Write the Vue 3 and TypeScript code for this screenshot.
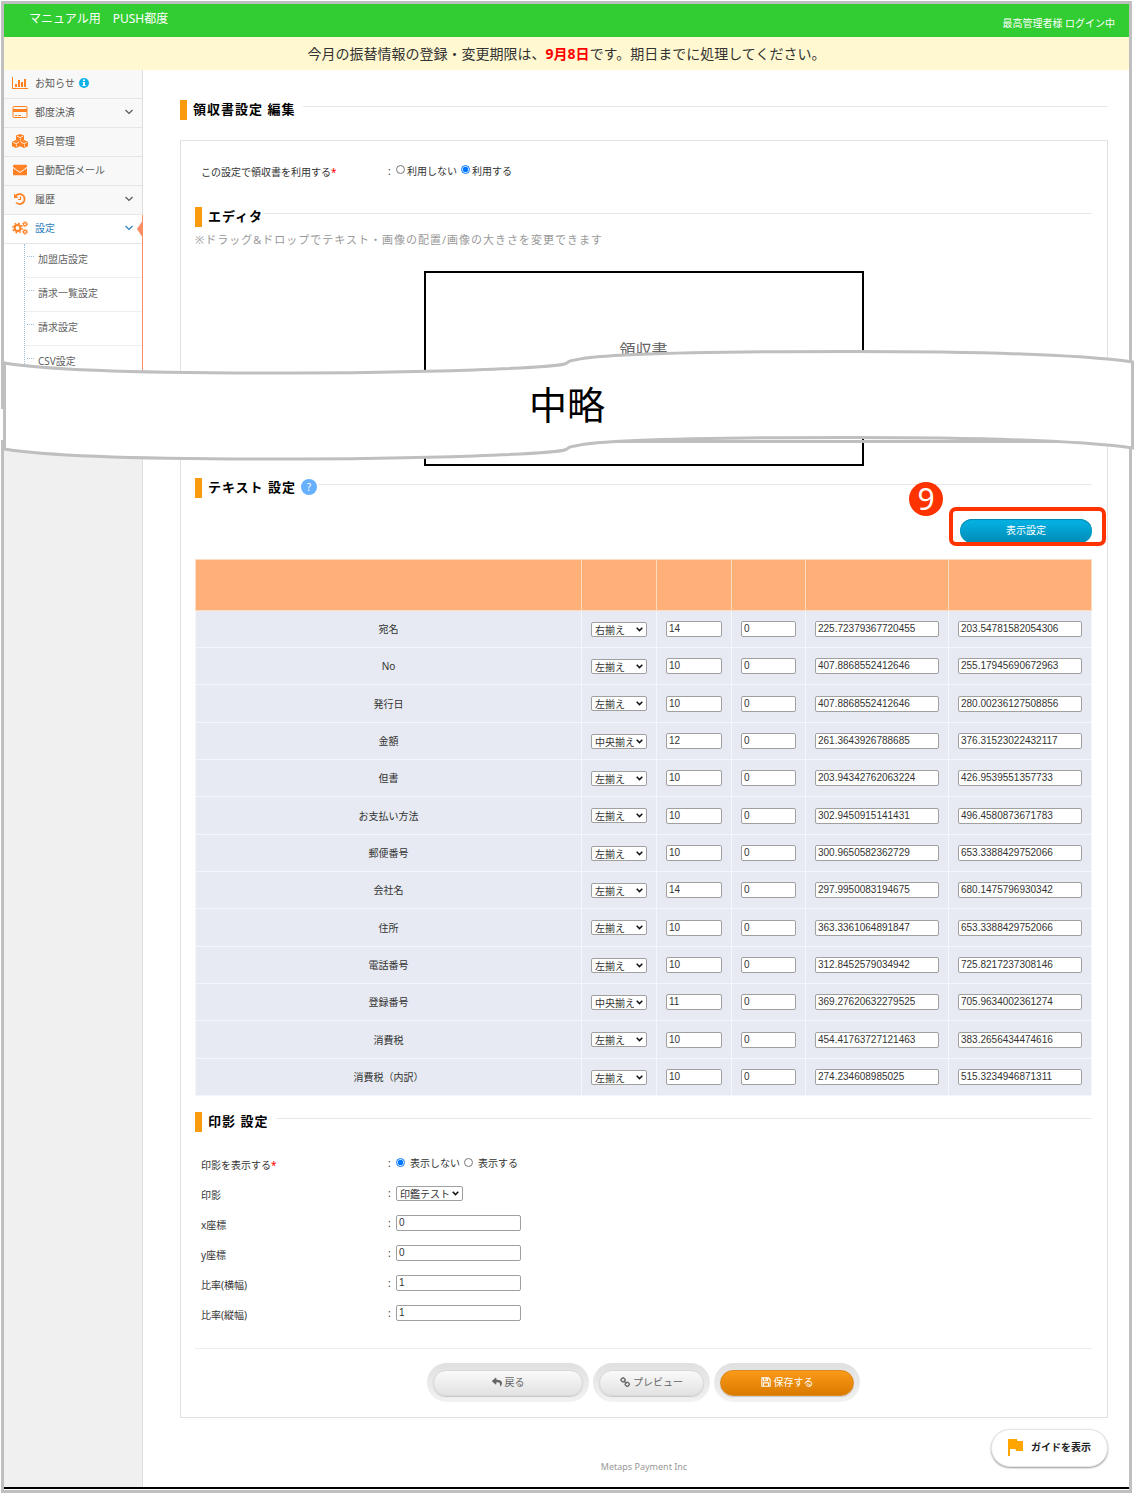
<script setup lang="ts">
import { ref } from 'vue'

type IconName = 'chart' | 'card' | 'cubes' | 'mail' | 'history' | 'cogs'

interface MenuItem {
  label: string
  icon: IconName
  info?: boolean
  expandable?: boolean
  children?: string[]
}

interface TextRow {
  name: string
  align: string
  size: string
  spacing: string
  x: string
  y: string
}

const menu: MenuItem[] = [
  { label: 'お知らせ', icon: 'chart', info: true },
  { label: '都度決済', icon: 'card', expandable: true },
  { label: '項目管理', icon: 'cubes' },
  { label: '自動配信メール', icon: 'mail' },
  { label: '履歴', icon: 'history', expandable: true },
  {
    label: '設定',
    icon: 'cogs',
    expandable: true,
    children: ['加盟店設定', '請求一覧設定', '請求設定', 'CSV設定'],
  },
]

const alignments = ['左揃え', '中央揃え', '右揃え']

const row = (name: string, align: string, size: string, x: string, y: string): TextRow => ({
  name,
  align,
  size,
  spacing: '0',
  x,
  y,
})

const rows = ref<TextRow[]>([
  row('宛名', '右揃え', '14', '225.72379367720455', '203.54781582054306'),
  row('No', '左揃え', '10', '407.8868552412646', '255.17945690672963'),
  row('発行日', '左揃え', '10', '407.8868552412646', '280.00236127508856'),
  row('金額', '中央揃え', '12', '261.3643926788685', '376.31523022432117'),
  row('但書', '左揃え', '10', '203.94342762063224', '426.9539551357733'),
  row('お支払い方法', '左揃え', '10', '302.9450915141431', '496.4580873671783'),
  row('郵便番号', '左揃え', '10', '300.9650582362729', '653.3388429752066'),
  row('会社名', '左揃え', '14', '297.9950083194675', '680.1475796930342'),
  row('住所', '左揃え', '10', '363.3361064891847', '653.3388429752066'),
  row('電話番号', '左揃え', '10', '312.8452579034942', '725.8217237308146'),
  row('登録番号', '中央揃え', '11', '369.27620632279525', '705.9634002361274'),
  row('消費税', '左揃え', '10', '454.41763727121463', '383.2656434474616'),
  row('消費税（内訳）', '左揃え', '10', '274.234608985025', '515.3234946871311'),
])

const useReceipt = ref('on')
const showSeal = ref('off')
const seal = ref('印鑑テスト')
const sealFields = ref([
  { id: 'seal-x', label: 'x座標', value: '0' },
  { id: 'seal-y', label: 'y座標', value: '0' },
  { id: 'seal-w', label: '比率(横幅)', value: '1' },
  { id: 'seal-h', label: '比率(縦幅)', value: '1' },
])
</script>

<template>
  <div class="page">
    <div class="frame">
      <header class="topbar">
        <div class="service">マニュアル用　PUSH都度</div>
        <div class="login">最高管理者様 ログイン中</div>
      </header>
      <div class="notice">
        今月の振替情報の登録・変更期限は、<strong>9月8日</strong>です。期日までに処理してください。
      </div>

      <div class="body">
        <nav class="sidebar">
          <ul class="menu">
            <li v-for="item in menu" :key="item.label" :class="{ active: item.children }">
              <a href="#" class="menu-link">
                <svg class="menu-icon" viewBox="0 0 16 14" aria-hidden="true">
                  <g v-if="item.icon === 'chart'" fill="currentColor">
                    <path d="M0 1h1v11h15v1H0z" />
                    <path d="M3 8h2v3H3zM6 4h2v7H6zM9 6h2v5H9zM12 3h2v8h-2z" />
                  </g>
                  <g v-else-if="item.icon === 'card'">
                    <rect x="1" y="1.5" width="14" height="11" rx="1" fill="none" stroke="currentColor" />
                    <path d="M1 4h14v3H1z" fill="currentColor" />
                    <path d="M3 10.5h2M6 10.5h3" stroke="currentColor" />
                  </g>
                  <g v-else-if="item.icon === 'cubes'">
                    <g fill="currentColor">
                      <path d="M8 0l4 1.600v4.400L8 7.800 4 6V1.600z" />
                      <path d="M4 6l4 1.700v4.500L4 14 0 12.200V7.700z" />
                      <path d="M12 6l4 1.700v4.500L12 14 8 12.200V7.700z" />
                    </g>
                    <path
                      d="M5 2.200l3 1.300 3-1.300M8.500 4.500v2M1 8.300l3 1.300 3-1.300M4.500 10.600v2M9 8.300l3 1.300 3-1.300M12.500 10.600v2"
                      fill="none"
                      stroke="#fff"
                      stroke-width=".8"
                    />
                  </g>
                  <svg v-else-if="item.icon === 'mail'" x="1" width="14" height="14" viewBox="0 0 512 512">
                    <path
                      fill="currentColor"
                      d="M502.3 190.8c3.900-3.100 9.700-.2 9.700 4.700V400c0 26.500-21.500 48-48 48H48c-26.500 0-48-21.500-48-48V195.600c0-5 5.700-7.800 9.700-4.700 22.400 17.400 52.100 39.500 154.100 113.600 21.100 15.400 56.700 47.800 92.200 47.600 35.700.3 72-32.800 92.300-47.600 102-74.100 131.600-96.300 154-113.700zM256 320c23.200.4 56.600-29.200 73.400-41.400 132.700-96.300 142.800-104.700 173.400-128.700 5.800-4.500 9.200-11.500 9.200-18.900v-19c0-26.500-21.500-48-48-48H48c-26.500 0-48 21.500-48 48v19c0 7.400 3.400 14.300 9.200 18.900 30.600 23.900 40.700 32.400 173.400 128.700 16.800 12.200 50.200 41.800 73.400 41.400z"
                    />
                  </svg>
                  <g v-else-if="item.icon === 'history'" fill="none" stroke="currentColor">
                    <path d="M3.500 4.200A5 5 0 1 1 4 10.500" stroke-width="1.800" />
                    <path d="M2 1.500v4.500h4.500z" fill="currentColor" stroke="none" />
                    <path d="M8.500 4.500v3H6" stroke-width="1.200" />
                  </g>
                  <g v-else fill="none" stroke="currentColor">
                    <circle cx="5.500" cy="7" r="2.900" stroke-width="2" />
                    <circle cx="5.500" cy="7" r="4.700" stroke-width="1.400" stroke-dasharray="1.850 1.840" />
                    <circle cx="13" cy="3.200" r="1.500" stroke-width="1.200" />
                    <circle cx="13" cy="3.200" r="2.500" stroke-dasharray="1 .96" />
                    <circle cx="13" cy="10.800" r="1.500" stroke-width="1.200" />
                    <circle cx="13" cy="10.800" r="2.500" stroke-dasharray="1 .96" />
                  </g>
                </svg>
                <span>{{ item.label }}</span>
                <svg v-if="item.info" class="info" viewBox="0 0 10 10" aria-hidden="true">
                  <circle cx="5" cy="5" r="5" fill="#0fb1e6" />
                  <path d="M4 1.500h2V3H4zM3.500 4H6v3h.7v1H3.400V7H4V5h-.5z" fill="#fff" />
                </svg>
                <svg v-if="item.expandable" class="chevron" viewBox="0 0 8 6" aria-hidden="true">
                  <path d="M.5 1L4 4.500 7.500 1" fill="none" stroke="currentColor" stroke-width="1.200" />
                </svg>
              </a>
              <ul v-if="item.children" class="submenu">
                <li v-for="child in item.children" :key="child">
                  <a href="#">{{ child }}</a>
                </li>
              </ul>
            </li>
          </ul>
        </nav>

        <main class="main">
          <h1 class="heading">領収書設定 編集</h1>

          <form class="panel" @submit.prevent>
            <div class="field first">
              <span class="field-label">この設定で領収書を利用する<em>*</em></span>
              <span class="field-body">
                <span class="colon">:</span>
                <label><input v-model="useReceipt" type="radio" name="use" value="off" />利用しない</label>
                <label><input v-model="useReceipt" type="radio" name="use" value="on" />利用する</label>
              </span>
            </div>

            <h2 class="heading tight">エディタ</h2>
            <p class="hint">※ドラッグ&amp;ドロップでテキスト・画像の配置/画像の大きさを変更できます</p>
            <div class="canvas">領収書</div>

            <h2 class="heading tight">テキスト 設定<button type="button" class="help">?</button></h2>

            <div class="toolbar">
              <div class="callout">
                <button type="button" class="display-button">表示設定</button>
                <span class="callout-box"></span>
                <span class="callout-number">9</span>
              </div>
            </div>

            <table class="settings">
              <colgroup>
                <col />
                <col class="c-align" />
                <col class="c-size" />
                <col class="c-space" />
                <col class="c-pos" />
                <col class="c-pos" />
              </colgroup>
              <thead>
                <tr>
                  <td v-for="n in 6" :key="n"></td>
                </tr>
              </thead>
              <tbody>
                <tr v-for="(r, i) in rows" :key="r.name">
                  <th :id="`row-${i}`" scope="row">{{ r.name }}</th>
                  <td>
                    <select v-model="r.align" :aria-labelledby="`row-${i}`">
                      <option v-for="a in alignments" :key="a">{{ a }}</option>
                    </select>
                  </td>
                  <td><input v-model="r.size" type="text" :aria-labelledby="`row-${i}`" /></td>
                  <td><input v-model="r.spacing" type="text" :aria-labelledby="`row-${i}`" /></td>
                  <td><input v-model="r.x" type="text" :aria-labelledby="`row-${i}`" /></td>
                  <td><input v-model="r.y" type="text" :aria-labelledby="`row-${i}`" /></td>
                </tr>
              </tbody>
            </table>

            <h2 class="heading">印影 設定</h2>
            <div class="fields">
              <div class="field spaced">
                <span class="field-label">印影を表示する<em>*</em></span>
                <span class="field-body">
                  <span class="colon">:</span>
                  <label><input v-model="showSeal" type="radio" name="seal" value="off" />表示しない</label>
                  <label><input v-model="showSeal" type="radio" name="seal" value="on" />表示する</label>
                </span>
              </div>
              <div class="field">
                <label class="field-label" for="seal-image">印影</label>
                <span class="field-body">
                  <span class="colon">:</span>
                  <select id="seal-image" v-model="seal">
                    <option>印鑑テスト</option>
                  </select>
                </span>
              </div>
              <div v-for="f in sealFields" :key="f.id" class="field">
                <label class="field-label" :for="f.id">{{ f.label }}</label>
                <span class="field-body">
                  <span class="colon">:</span>
                  <input :id="f.id" v-model="f.value" type="text" />
                </span>
              </div>
            </div>

            <div class="actions">
              <span class="pill">
                <button type="button" class="back">
                  <svg viewBox="0 0 512 512" aria-hidden="true">
                    <path
                      fill="currentColor"
                      d="M8.309 189.836L184.313 37.851C199.719 24.546 224 35.347 224 56.015v80.053c160.629 1.839 288 34.032 288 186.258 0 61.441-39.581 122.309-83.333 154.132-13.653 9.931-33.111-2.533-28.077-18.631 45.344-145.012-21.507-183.510-176.590-185.742V360c0 20.700-24.300 31.453-39.687 18.164l-176.004-152c-11.071-9.562-11.086-26.753 0-36.328z"
                    />
                  </svg>
                  戻る
                </button>
              </span>
              <span class="pill">
                <button type="button" class="preview">
                  <svg viewBox="0 0 12 12" aria-hidden="true">
                    <g fill="none" stroke="currentColor" stroke-width="1.600">
                      <rect x="1.500" y="1.300" width="4.400" height="4.400" rx="1.500" transform="rotate(45 3.700 3.500)" />
                      <rect x="6.500" y="6.500" width="4.400" height="4.400" rx="1.500" transform="rotate(45 8.700 8.700)" />
                      <path d="M4.500 4.500l3.200 3.200" />
                    </g>
                  </svg>
                  プレビュー
                </button>
              </span>
              <span class="pill">
                <button type="submit" class="save">
                  <svg viewBox="0 0 12 12" aria-hidden="true">
                    <path
                      d="M1 1h8l2 2v8H1zM3 1v3.500h5V1M3 11V7h6v4"
                      fill="none"
                      stroke="currentColor"
                      stroke-width="1.300"
                    />
                    <path d="M5.500 1.500h1.500v2H5.500z" fill="currentColor" />
                  </svg>
                  保存する
                </button>
              </span>
            </div>
          </form>

          <footer class="footer">
            <span class="company">Metaps Payment Inc</span>
            <button type="button" class="guide">
              <svg viewBox="5 4 15 17" aria-hidden="true">
                <path d="M14.400 6L14 4H5v17h2v-7h5.600l.4 2h7V6z" fill="#ffa500" />
              </svg>
              ガイドを表示
            </button>
          </footer>
        </main>
      </div>
    </div>

    <!-- Torn strip standing in for the omitted middle of the page -->
    <div class="omitted">
      <svg viewBox="0 0 1134 112" preserveAspectRatio="none" aria-hidden="true">
        <path d="M0 59h4v31H0z" fill="#fff" />
        <path d="M2 91.500H1130" stroke="#bfbfbf" stroke-width="3" />
        <path
          d="M4.500 13C40 19 120 23 270 23C430 23 555 18 566 13.500C570 11.500 567 11 575 10C600 4 720 1.500 850 1.500C1000 1.500 1090 6 1132.500 12V98C1090 92 1000 87.500 850 87.500C720 87.500 600 90 575 96C567 97 570 97.500 566 99.500C555 104 430 109 270 109C120 109 40 105 4.500 99Z"
          fill="#fff"
          stroke="#bfbfbf"
          stroke-width="3"
        />
      </svg>
      <span>中略</span>
    </div>
  </div>
</template>

<style>
body {
  margin: 0;
  background: #fff;
}
</style>

<style scoped>
* {
  box-sizing: border-box;
}

.page {
  position: relative;
  padding: 1px 2px 1px 1px;
  color: #333;
  font-family: 'Noto Sans', 'Noto Sans CJK JP', sans-serif;
  font-size: 10px;
  line-height: 16px;
}

.frame {
  border: 3px solid #bfbfbf;
}

a {
  color: inherit;
  text-decoration: none;
}

ul {
  margin: 0;
  padding: 0;
  list-style: none;
}

button,
select,
input {
  margin: 0;
  font: inherit;
  color: inherit;
}

.topbar {
  display: flex;
  justify-content: space-between;
  height: 33px;
  padding: 0 14px 0 25px;
  background: #32cd32;
  color: #fff;
}

.service {
  font-size: 12px;
  line-height: 30px;
}

.login {
  line-height: 38px;
}

.notice {
  background: #fff8d0;
  font-size: 14px;
  line-height: 33px;
  text-align: center;
}

.notice strong {
  color: #f00;
}

.body {
  display: grid;
  grid-template-columns: 139px 1fr;
  margin-bottom: 1px;
  border-bottom: 2px solid #000;
}

/* Sidebar */
.sidebar {
  background: #f0f0f0;
  border-right: 1px solid #ddd;
}

.menu-link {
  display: flex;
  align-items: center;
  height: 29px;
  padding: 0 9px 2px 8px;
  background: #f8f8f8;
  border-bottom: 1px solid #e6e6e6;
  color: #585858;
}

.menu-icon {
  width: 16px;
  height: 14px;
  margin-right: 7px;
  color: #ff8122;
}

.info {
  width: 10px;
  height: 10px;
  margin-left: 4px;
}

.chevron {
  width: 8px;
  height: 6px;
  margin-left: auto;
}

.active {
  position: relative;
  background: #fff;
  box-shadow: 1px 0 0 #fa8d63;
}

.active .menu-link {
  background: #fff;
  color: #2b7dbc;
}

.active::after {
  content: '';
  position: absolute;
  top: 5px;
  right: -1px;
  border: solid transparent;
  border-width: 9px 6px 9px 0;
  border-right-color: #fa8d63;
}

.submenu {
  margin-left: 20px;
  border-left: 1px dotted #9dbdd6;
}

.submenu li {
  position: relative;
  height: 34px;
  padding: 7px 0 0 13px;
  border-bottom: 1px solid #eee;
  color: #616161;
}

.submenu li::before {
  content: '';
  position: absolute;
  top: 12px;
  left: 2px;
  width: 7px;
  border-top: 1px dotted #9dbdd6;
}

/* Main column */
.main {
  min-width: 0;
  padding: 30px 21px 12px 37px;
}

.heading {
  display: flex;
  align-items: flex-start;
  height: 20px;
  margin: 0;
  color: #000;
  font-size: 13px;
  line-height: 18px;
  letter-spacing: 1px;
}

.heading::before {
  content: '';
  width: 7px;
  height: 20px;
  margin-right: 6px;
  background: #f99b0c;
}

.heading::after {
  content: '';
  flex: 1;
  margin: 6px 0 0 8px;
  border-top: 1px solid #e8e8e8;
}

.heading.tight::after {
  margin-left: 1px;
}

.help {
  width: 16px;
  height: 16px;
  margin: 1px 0 0 5px;
  padding: 0;
  border: 0;
  border-radius: 50%;
  background: #66b0ff;
  color: #fff;
  font-size: 10px;
  font-weight: normal;
  line-height: 16px;
}

.panel {
  margin-top: 20px;
  padding: 15px 15px 15px 14px;
  border: 1px solid #e2e2e2;
}

.field {
  display: flex;
  align-items: center;
  height: 30px;
  padding-left: 6px;
}

.field.first {
  height: 29px;
  margin-bottom: 22px;
}

.field-label {
  width: 187px;
  padding-top: 3px;
}

.field-label em {
  color: #f00;
  font-style: normal;
}

.field-body {
  display: flex;
  align-items: center;
}

.colon {
  width: 8px;
}

.field-body label {
  display: flex;
  align-items: center;
  margin-right: 4px;
}

input[type='radio'] {
  width: 9px;
  height: 9px;
  margin: 0 2px 2px 0;
}

.spaced input[type='radio'] {
  margin-right: 5px;
}

.hint {
  margin: 4px 0 0;
  color: #999;
  font-size: 11px;
  line-height: 18px;
  letter-spacing: 1px;
}

.canvas {
  width: 440px;
  height: 195px;
  margin: 22px auto 12px;
  padding-top: 65px;
  border: 2px solid #000;
  color: #666;
  font-size: 16px;
  line-height: 24px;
  text-align: center;
}

.toolbar {
  display: flex;
  justify-content: flex-end;
  margin: 21px 0 16px;
}

.callout {
  position: relative;
}

.display-button {
  display: block;
  width: 132px;
  height: 24px;
  padding: 0 0 2px;
  border: 0;
  border-radius: 12px;
  background: linear-gradient(#04b4e6, #018bb5);
  box-shadow: inset 0 1px 1px #0585aa;
  color: #fff;
}

.callout-box {
  position: absolute;
  inset: -12px -14px -3px -11px;
  border: 4px solid #f30;
  border-radius: 7px;
  pointer-events: none;
}

.callout-number {
  position: absolute;
  top: -37px;
  left: -51px;
  width: 34px;
  height: 34px;
  border-radius: 50%;
  background: #f30;
  color: #fff;
  font-size: 30px;
  line-height: 34px;
  text-align: center;
}

.settings {
  width: 100%;
  margin-bottom: 16px;
  border-collapse: collapse;
  table-layout: fixed;
}

.c-align,
.c-size {
  width: 75px;
}

.c-space {
  width: 74px;
}

.c-pos {
  width: 143px;
}

.settings thead td {
  height: 51px;
  background: #ffb078;
  border: 1px solid #fddcc2;
}

.settings tbody th,
.settings tbody td {
  height: 37px;
  padding: 0 9px;
  background: #e7eaf2;
  border: 1px solid #f5f6fa;
  font-weight: normal;
  text-align: center;
}

.settings tbody tr:nth-child(3n) td {
  height: 38px;
}

input[type='text'],
select {
  display: block;
  border: 1px solid #a0a0a0;
  border-radius: 2px;
  background: #fff;
}

input[type='text'] {
  width: 125px;
  height: 16px;
  padding: 0 2px;
  font-family: 'Liberation Sans', Arial, sans-serif;
}

.settings input[type='text'],
.settings select {
  width: 100%;
}

select {
  appearance: none;
  height: 15px;
  padding: 0 12px 0 3px;
  background: #fff
    url("data:image/svg+xml,%3Csvg xmlns='http://www.w3.org/2000/svg' width='7' height='5'%3E%3Cpath d='M.7.8l2.800 2.800L6.300.8' fill='none' stroke='%23111' stroke-width='1.500'/%3E%3C/svg%3E")
    no-repeat right 3px center;
  font-family: 'Noto Sans CJK JP', sans-serif;
  line-height: 13px;
}

.fields {
  margin-top: 16px;
  padding-bottom: 20px;
  border-bottom: 1px solid #ececec;
}

.actions {
  display: flex;
  justify-content: center;
  gap: 4px;
  margin-top: 14px;
}

.pill {
  padding: 7px 6px 6px;
  border-radius: 20px;
  background: linear-gradient(#e0e0e0, #f2f2f2);
}

.pill button {
  display: flex;
  align-items: center;
  justify-content: center;
  gap: 3px;
  height: 26px;
  padding: 0 0 2px;
  border: 1px solid #d8d8d8;
  border-radius: 13px;
  background: linear-gradient(#fafafa, #e2e2e2);
  box-shadow: 0 1px 1px #c8c8c8;
  color: #666;
}

.pill svg {
  width: 10px;
  height: 10px;
}

.pill .back {
  width: 150px;
}

.pill .preview {
  width: 105px;
}

.pill .save {
  width: 134px;
  border-color: #d98a20;
  background: linear-gradient(#fb9a18, #d97a00);
  color: #fff;
}

.footer {
  position: relative;
  padding-top: 41px;
  text-align: center;
}

.company {
  display: block;
  color: #999;
  font-size: 9px;
  line-height: 16px;
}

.guide {
  position: absolute;
  top: 11px;
  right: 0;
  display: flex;
  align-items: center;
  justify-content: center;
  gap: 8px;
  width: 117px;
  height: 38px;
  padding: 0 0 2px;
  border: 1px solid #e6e6e6;
  border-radius: 19px;
  background: #fff;
  box-shadow: 0 1px 2px #999;
  color: #222;
  font-weight: bold;
}

.guide svg {
  width: 15px;
  height: 17px;
}

.omitted {
  position: absolute;
  top: 350px;
  left: 0;
  width: 100%;
  height: 112px;
}

.omitted svg {
  display: block;
  width: 100%;
  height: 100%;
}

.omitted span {
  position: absolute;
  top: 26px;
  left: 0;
  width: 100%;
  color: #000;
  font-size: 38px;
  line-height: 56px;
  text-align: center;
}
</style>
